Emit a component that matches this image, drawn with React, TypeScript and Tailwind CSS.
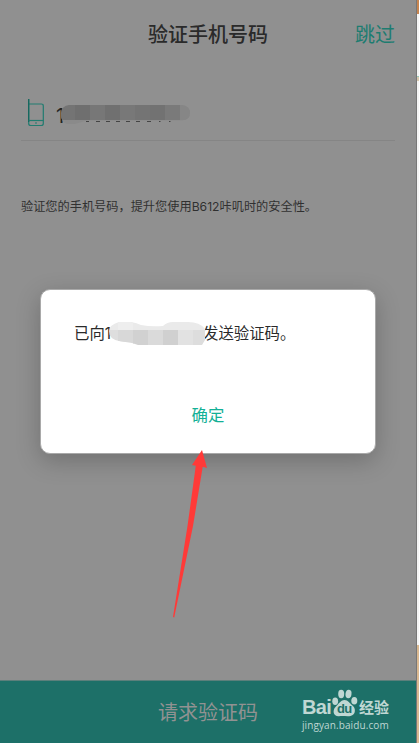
import React from "react";

function PhoneIcon() {
  return (
    <svg width="17" height="28" viewBox="0 0 17 28" fill="none" stroke="#217c70" strokeWidth="1.2">
      <path d="M0.7 0V24.5Q0.7 26.5 2.7 26.5H13.3Q15.3 26.5 15.3 24.5V7Q15.3 5 13.3 5H0.7" />
      <path d="M0.7 0V23" stroke="#14675e" />
      <path d="M0.7 21.5H15.3" />
      <path d="M7 24H9" />
    </svg>
  );
}

function PhoneMask() {
  const shades = ["#747474", "#6f6f6f", "#777777", "#707070", "#787878", "#747474", "#727272", "#7a7a7a", "#868686"];
  return (
    <svg className="absolute left-[5px] top-[6px]" width="130" height="20" viewBox="0 0 130 20">
      <defs>
        <clipPath id="phone-mask">
          <path d="M8 0H121Q129 1 129 8T121 15.5H26L14 19H6Q0 17 0 9Q0 1 8 0Z" />
        </clipPath>
      </defs>
      <path
        d="M25 16.5h3M35 16.5h4M45 16.5h4M55 16.5h4M65 16.5h4M75 16.5h4M86 16.5h4M98 16.5h1.5M108 16.5h1.5"
        stroke="#444"
        strokeWidth="1"
      />
      <g clipPath="url(#phone-mask)">
        <rect width="130" height="20" fill="#8a8a8a" />
        {shades.map((shade, i) => (
          <rect key={i} x={i === 0 ? 0 : i * 15 - 1} width="16" height="15" fill={shade} />
        ))}
      </g>
    </svg>
  );
}

function MessageMask() {
  const shades = ["#dedede", "#d8d8d8", "#d1d1d1", "#dadada", "#d0d0d0", "#e2e2e2", "#dddddd"];
  return (
    <svg className="absolute -left-[2px] top-0" width="97" height="23" viewBox="0 0 97 23">
      <defs>
        <clipPath id="message-mask">
          <path d="M10 0H22Q28 1 32 3Q42 5 54 4Q58 0 64 0H79Q91 0 96 7V18L93 23H29L23 21L10 19Q0 17 0 9Q0 3 10 0Z" />
        </clipPath>
      </defs>
      <g clipPath="url(#message-mask)">
        <rect width="97" height="8" fill="#eaeaea" />
        <rect x="9" width="15" height="8" fill="#eeeeee" />
        {shades.map((shade, i) => (
          <rect key={i} x={i === 0 ? 0 : i * 15 - 6} y="8" width="16" height="15" fill={shade} />
        ))}
      </g>
    </svg>
  );
}

function Watermark() {
  return (
    <div className="absolute left-[302px] top-[688px] h-[46px] w-[90px] text-[#bfd7d3]">
      <div className="flex h-[31px] items-end whitespace-nowrap">
        <span className="w-[31px] font-['Liberation_Sans',sans-serif] text-[20px] font-bold leading-[24px] tracking-[-0.6px]">Bai</span>
        <span className="relative h-[29px] w-[24px]">
          <svg className="absolute -left-[1px] -top-[1px]" width="26" height="28" viewBox="0 0 26 28" fill="currentColor">
            <ellipse cx="3.2" cy="12.3" rx="2.9" ry="3.7" />
            <ellipse cx="9.2" cy="5" rx="3" ry="4.2" />
            <ellipse cx="16.5" cy="5" rx="3" ry="4.2" transform="rotate(8 16.5 5)" />
            <ellipse cx="22.3" cy="11.8" rx="3" ry="3.8" />
            <path d="M12.5 11C16 11 18 14.5 20.5 16.5C24 19 24 26 18.5 27C15 27.7 10.5 26.5 7 27.3C1.5 27.8 0 21.5 3.5 18C6 15.8 8.5 11 12.5 11Z" />
          </svg>
          <span className="absolute left-[4px] top-[12px] font-['Liberation_Sans',sans-serif] text-[13px] font-bold leading-[14px] tracking-[-0.8px] text-[#1d7068]">du</span>
        </span>
        <span className="pl-[2px] font-['Noto_Sans_CJK_SC',sans-serif] text-[15px] font-bold leading-[25px]">经验</span>
      </div>
      <div className="whitespace-nowrap font-['Open_Sans',sans-serif] text-[10px] font-medium leading-[12px] tracking-[0.1px]">jingyan.baidu.com</div>
    </div>
  );
}

export default function App() {
  return (
    <div className="relative flex h-[743px] w-[419px] overflow-hidden bg-[#f5f5f5] font-['Liberation_Sans','Noto_Sans_CJK_SC',sans-serif]">
      <main className="flex h-full w-[417px] flex-col border-r border-[#777777] bg-[#909090]">
        <header className="grid h-[67px] grid-cols-[1fr_120px_1fr] items-center pt-[2px]">
          <span />
          <h1 className="whitespace-nowrap text-[20px] font-medium leading-[30px] text-[#2a2a2a]">验证手机号码</h1>
          <button className="justify-self-end whitespace-nowrap pr-[21px] text-[20px] leading-[30px] text-[#1d7c70]">跳过</button>
        </header>
        <div className="mx-[21px] mt-[32px] flex h-[42px] items-start border-b border-[#858585] pl-[7px]">
          <PhoneIcon />
          <div className="relative ml-[11px] h-[28px]">
            <span className="block pt-[6px] font-['Inter',sans-serif] text-[20px] leading-[22px] text-[#242424]">1</span>
            <PhoneMask />
          </div>
        </div>
        <p className="ml-[21px] mt-[56px] h-[19px] whitespace-nowrap text-[12.2px] leading-[19px] text-[#303030]">
          验证您的手机号码，提升您使用<span className="font-['Inter',sans-serif] text-[12.2px]">B612</span>咔叽时的安全性。
        </p>
        <section className="ml-[40px] mt-[73px] h-[165px] w-[336px] rounded-[10px] border border-[#a9a9a9] bg-white shadow-[0_7px_24px_rgba(0,0,0,0.22)]">
          <div className="flex h-[23px] translate-y-[32px] whitespace-nowrap pl-[33px] text-[15.4px] leading-[23px] text-[#2a2a2a]">
            <span className="w-[37px]">已向<span className="font-['Inter',sans-serif]">1</span></span>
            <span className="relative h-[23px] w-[92px]"><MessageMask /></span>
            <span>发送验证码。</span>
          </div>
          <button className="mt-[90px] block h-[24px] w-full text-[16.4px] leading-[24px] text-[#13b096]">确定</button>
        </section>
        <footer className="mt-auto flex h-[63px] items-center justify-center border-t border-[#5c7f7b] bg-[#1d7068] pt-[2px]">
          <button className="text-[20px] leading-[30px] text-[#929292]">请求验证码</button>
        </footer>
      </main>
      <aside className="flex w-[2px] flex-col">
        <div className="h-[14px] bg-[#c78550]" />
        <div className="h-[62px] bg-[#f5f5f5]" />
        <div className="h-[1px] bg-[#9acaba]" />
        <div className="h-[4px] bg-[#dbcbb0]" />
        <div className="h-[564px] bg-[#f5f5f5]" />
        <div className="flex-1 bg-[#dab991]" />
      </aside>
      <svg className="absolute left-[165px] top-[446px]" width="50" height="176" viewBox="0 0 50 176">
        <path d="M37 4L42 22L37.7 20.8L28 80L9.2 171.5L8 171L22.5 80L30.8 19.8L27 19Z" fill="#ff3a38" />
      </svg>
      <Watermark />
    </div>
  );
}
